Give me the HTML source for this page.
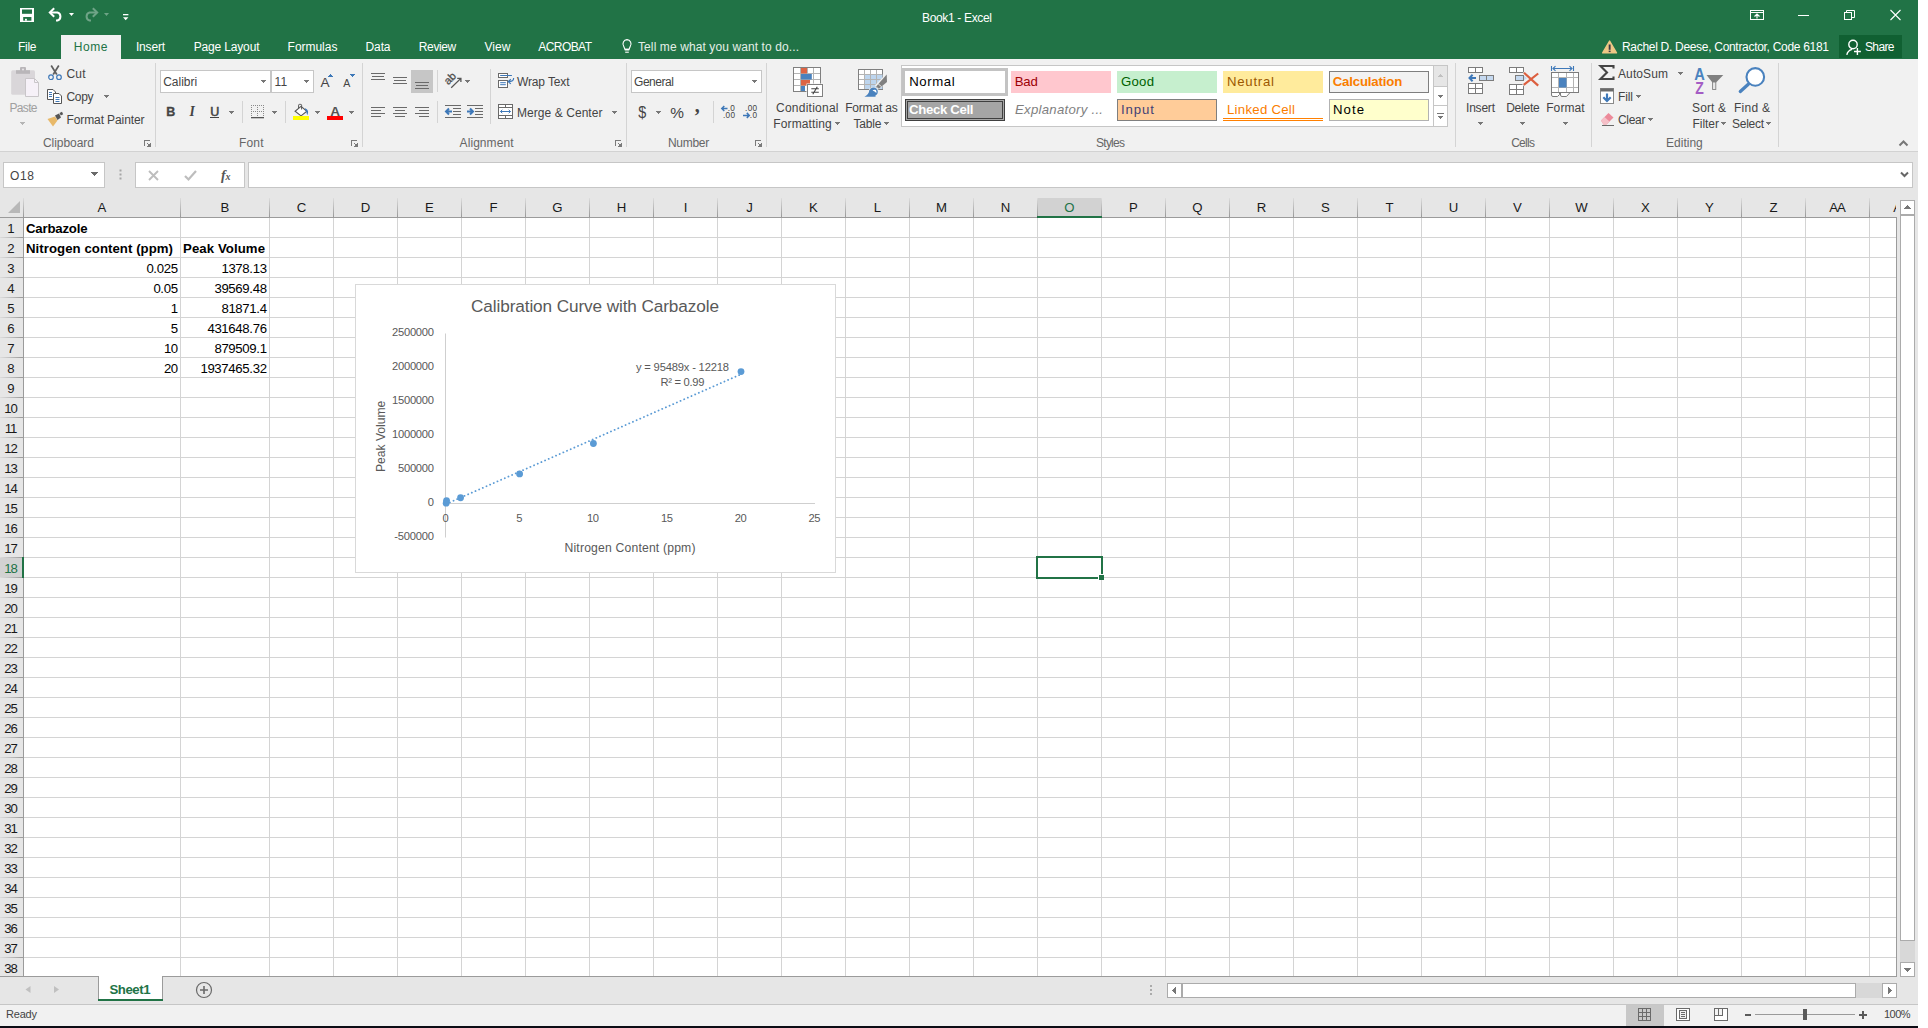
<!DOCTYPE html>
<html lang="en"><head><meta charset="utf-8"><title>Book1 - Excel</title>
<style>
html,body{margin:0;padding:0}
body{width:1928px;height:1028px;background:#fff;position:relative;overflow:hidden;font-family:"Liberation Sans", sans-serif;}
div,svg,span.t{position:absolute;box-sizing:border-box}
span.t{white-space:pre;line-height:1;}
svg{overflow:visible}
svg text{font-family:"Liberation Sans", sans-serif}
</style></head><body>
<div style="left:0px;top:0px;width:1918px;height:1026px;background:#e6e6e6;"></div>
<div style="left:0px;top:0px;width:1918px;height:59px;background:#217346;"></div>
<div style="left:0px;top:59px;width:1918px;height:92px;background:#f1f1f1;"></div>
<div style="left:0px;top:151px;width:1918px;height:1px;background:#d2d2d2;"></div>
<div style="left:0px;top:1026px;width:1918px;height:2px;background:#0c0c14;"></div>
<div style="left:24px;top:218px;width:1872px;height:758px;background:#fff;"></div>
<svg style="left:0;top:0" width="1918" height="1026"><g fill="#d4d4d4"><rect x="24" y="237" width="1872" height="1"/><rect x="24" y="257" width="1872" height="1"/><rect x="24" y="277" width="1872" height="1"/><rect x="24" y="297" width="1872" height="1"/><rect x="24" y="317" width="1872" height="1"/><rect x="24" y="337" width="1872" height="1"/><rect x="24" y="357" width="1872" height="1"/><rect x="24" y="377" width="1872" height="1"/><rect x="24" y="397" width="1872" height="1"/><rect x="24" y="417" width="1872" height="1"/><rect x="24" y="437" width="1872" height="1"/><rect x="24" y="457" width="1872" height="1"/><rect x="24" y="477" width="1872" height="1"/><rect x="24" y="497" width="1872" height="1"/><rect x="24" y="517" width="1872" height="1"/><rect x="24" y="537" width="1872" height="1"/><rect x="24" y="557" width="1872" height="1"/><rect x="24" y="577" width="1872" height="1"/><rect x="24" y="597" width="1872" height="1"/><rect x="24" y="617" width="1872" height="1"/><rect x="24" y="637" width="1872" height="1"/><rect x="24" y="657" width="1872" height="1"/><rect x="24" y="677" width="1872" height="1"/><rect x="24" y="697" width="1872" height="1"/><rect x="24" y="717" width="1872" height="1"/><rect x="24" y="737" width="1872" height="1"/><rect x="24" y="757" width="1872" height="1"/><rect x="24" y="777" width="1872" height="1"/><rect x="24" y="797" width="1872" height="1"/><rect x="24" y="817" width="1872" height="1"/><rect x="24" y="837" width="1872" height="1"/><rect x="24" y="857" width="1872" height="1"/><rect x="24" y="877" width="1872" height="1"/><rect x="24" y="897" width="1872" height="1"/><rect x="24" y="917" width="1872" height="1"/><rect x="24" y="937" width="1872" height="1"/><rect x="24" y="957" width="1872" height="1"/><rect x="180" y="218" width="1" height="758"/><rect x="269" y="218" width="1" height="758"/><rect x="333" y="218" width="1" height="758"/><rect x="397" y="218" width="1" height="758"/><rect x="461" y="218" width="1" height="758"/><rect x="525" y="218" width="1" height="758"/><rect x="589" y="218" width="1" height="758"/><rect x="653" y="218" width="1" height="758"/><rect x="717" y="218" width="1" height="758"/><rect x="781" y="218" width="1" height="758"/><rect x="845" y="218" width="1" height="758"/><rect x="909" y="218" width="1" height="758"/><rect x="973" y="218" width="1" height="758"/><rect x="1037" y="218" width="1" height="758"/><rect x="1101" y="218" width="1" height="758"/><rect x="1165" y="218" width="1" height="758"/><rect x="1229" y="218" width="1" height="758"/><rect x="1293" y="218" width="1" height="758"/><rect x="1357" y="218" width="1" height="758"/><rect x="1421" y="218" width="1" height="758"/><rect x="1485" y="218" width="1" height="758"/><rect x="1549" y="218" width="1" height="758"/><rect x="1613" y="218" width="1" height="758"/><rect x="1677" y="218" width="1" height="758"/><rect x="1741" y="218" width="1" height="758"/><rect x="1805" y="218" width="1" height="758"/><rect x="1869" y="218" width="1" height="758"/></g></svg>
<div style="left:0px;top:198px;width:1896px;height:19px;background:#e6e6e6;"></div>
<div style="left:0px;top:217px;width:24px;height:759px;background:#e6e6e6;"></div>
<div style="left:1038px;top:198px;width:63px;height:19px;background:#d2d2d2;"></div>
<div style="left:0px;top:558px;width:23px;height:19px;background:#d2d2d2;"></div>
<svg style="left:0;top:0" width="1918" height="1026"><defs><linearGradient id="hgv" x1="0" y1="0" x2="0" y2="1"><stop offset="0" stop-color="#dcdcdc"/><stop offset="1" stop-color="#999999"/></linearGradient><linearGradient id="hgh" x1="0" y1="0" x2="1" y2="0"><stop offset="0" stop-color="#dcdcdc"/><stop offset="1" stop-color="#999999"/></linearGradient></defs><g><rect x="23" y="198" width="1" height="19" fill="url(#hgv)"/><rect x="180" y="198" width="1" height="19" fill="url(#hgv)"/><rect x="269" y="198" width="1" height="19" fill="url(#hgv)"/><rect x="333" y="198" width="1" height="19" fill="url(#hgv)"/><rect x="397" y="198" width="1" height="19" fill="url(#hgv)"/><rect x="461" y="198" width="1" height="19" fill="url(#hgv)"/><rect x="525" y="198" width="1" height="19" fill="url(#hgv)"/><rect x="589" y="198" width="1" height="19" fill="url(#hgv)"/><rect x="653" y="198" width="1" height="19" fill="url(#hgv)"/><rect x="717" y="198" width="1" height="19" fill="url(#hgv)"/><rect x="781" y="198" width="1" height="19" fill="url(#hgv)"/><rect x="845" y="198" width="1" height="19" fill="url(#hgv)"/><rect x="909" y="198" width="1" height="19" fill="url(#hgv)"/><rect x="973" y="198" width="1" height="19" fill="url(#hgv)"/><rect x="1037" y="198" width="1" height="19" fill="url(#hgv)"/><rect x="1101" y="198" width="1" height="19" fill="url(#hgv)"/><rect x="1165" y="198" width="1" height="19" fill="url(#hgv)"/><rect x="1229" y="198" width="1" height="19" fill="url(#hgv)"/><rect x="1293" y="198" width="1" height="19" fill="url(#hgv)"/><rect x="1357" y="198" width="1" height="19" fill="url(#hgv)"/><rect x="1421" y="198" width="1" height="19" fill="url(#hgv)"/><rect x="1485" y="198" width="1" height="19" fill="url(#hgv)"/><rect x="1549" y="198" width="1" height="19" fill="url(#hgv)"/><rect x="1613" y="198" width="1" height="19" fill="url(#hgv)"/><rect x="1677" y="198" width="1" height="19" fill="url(#hgv)"/><rect x="1741" y="198" width="1" height="19" fill="url(#hgv)"/><rect x="1805" y="198" width="1" height="19" fill="url(#hgv)"/><rect x="1869" y="198" width="1" height="19" fill="url(#hgv)"/><rect x="0" y="237" width="23" height="1" fill="url(#hgh)"/><rect x="0" y="257" width="23" height="1" fill="url(#hgh)"/><rect x="0" y="277" width="23" height="1" fill="url(#hgh)"/><rect x="0" y="297" width="23" height="1" fill="url(#hgh)"/><rect x="0" y="317" width="23" height="1" fill="url(#hgh)"/><rect x="0" y="337" width="23" height="1" fill="url(#hgh)"/><rect x="0" y="357" width="23" height="1" fill="url(#hgh)"/><rect x="0" y="377" width="23" height="1" fill="url(#hgh)"/><rect x="0" y="397" width="23" height="1" fill="url(#hgh)"/><rect x="0" y="417" width="23" height="1" fill="url(#hgh)"/><rect x="0" y="437" width="23" height="1" fill="url(#hgh)"/><rect x="0" y="457" width="23" height="1" fill="url(#hgh)"/><rect x="0" y="477" width="23" height="1" fill="url(#hgh)"/><rect x="0" y="497" width="23" height="1" fill="url(#hgh)"/><rect x="0" y="517" width="23" height="1" fill="url(#hgh)"/><rect x="0" y="537" width="23" height="1" fill="url(#hgh)"/><rect x="0" y="557" width="23" height="1" fill="url(#hgh)"/><rect x="0" y="577" width="23" height="1" fill="url(#hgh)"/><rect x="0" y="597" width="23" height="1" fill="url(#hgh)"/><rect x="0" y="617" width="23" height="1" fill="url(#hgh)"/><rect x="0" y="637" width="23" height="1" fill="url(#hgh)"/><rect x="0" y="657" width="23" height="1" fill="url(#hgh)"/><rect x="0" y="677" width="23" height="1" fill="url(#hgh)"/><rect x="0" y="697" width="23" height="1" fill="url(#hgh)"/><rect x="0" y="717" width="23" height="1" fill="url(#hgh)"/><rect x="0" y="737" width="23" height="1" fill="url(#hgh)"/><rect x="0" y="757" width="23" height="1" fill="url(#hgh)"/><rect x="0" y="777" width="23" height="1" fill="url(#hgh)"/><rect x="0" y="797" width="23" height="1" fill="url(#hgh)"/><rect x="0" y="817" width="23" height="1" fill="url(#hgh)"/><rect x="0" y="837" width="23" height="1" fill="url(#hgh)"/><rect x="0" y="857" width="23" height="1" fill="url(#hgh)"/><rect x="0" y="877" width="23" height="1" fill="url(#hgh)"/><rect x="0" y="897" width="23" height="1" fill="url(#hgh)"/><rect x="0" y="917" width="23" height="1" fill="url(#hgh)"/><rect x="0" y="937" width="23" height="1" fill="url(#hgh)"/><rect x="0" y="957" width="23" height="1" fill="url(#hgh)"/><rect x="0" y="217" width="1896" height="1" fill="#9b9b9b"/><rect x="23" y="217" width="1" height="759" fill="#9b9b9b"/><rect x="0" y="976" width="1897" height="1" fill="#9b9b9b"/><rect x="1896" y="217" width="1" height="759" fill="#9b9b9b"/><path d="M20 201 L20 213 L8 213 Z" fill="#b8b8b8"/></g></svg>
<div style="left:1037px;top:216px;width:65px;height:2px;background:#217346;"></div>
<div style="left:22px;top:557px;width:2px;height:21px;background:#217346;"></div>
<span class="t" style="left:97.60px;top:201.15px;font-size:13.2px;color:#1a1a1a;">A</span>
<span class="t" style="left:220.60px;top:201.15px;font-size:13.2px;color:#1a1a1a;">B</span>
<span class="t" style="left:296.73px;top:201.15px;font-size:13.2px;color:#1a1a1a;">C</span>
<span class="t" style="left:360.73px;top:201.15px;font-size:13.2px;color:#1a1a1a;">D</span>
<span class="t" style="left:425.10px;top:201.15px;font-size:13.2px;color:#1a1a1a;">E</span>
<span class="t" style="left:489.47px;top:201.15px;font-size:13.2px;color:#1a1a1a;">F</span>
<span class="t" style="left:552.37px;top:201.15px;font-size:13.2px;color:#1a1a1a;">G</span>
<span class="t" style="left:616.73px;top:201.15px;font-size:13.2px;color:#1a1a1a;">H</span>
<span class="t" style="left:683.66px;top:201.15px;font-size:13.2px;color:#1a1a1a;">I</span>
<span class="t" style="left:746.20px;top:201.15px;font-size:13.2px;color:#1a1a1a;">J</span>
<span class="t" style="left:809.10px;top:201.15px;font-size:13.2px;color:#1a1a1a;">K</span>
<span class="t" style="left:873.83px;top:201.15px;font-size:13.2px;color:#1a1a1a;">L</span>
<span class="t" style="left:936.00px;top:201.15px;font-size:13.2px;color:#1a1a1a;">M</span>
<span class="t" style="left:1000.73px;top:201.15px;font-size:13.2px;color:#1a1a1a;">N</span>
<span class="t" style="left:1064.37px;top:201.15px;font-size:13.2px;color:#217346;">O</span>
<span class="t" style="left:1129.10px;top:201.15px;font-size:13.2px;color:#1a1a1a;">P</span>
<span class="t" style="left:1192.37px;top:201.15px;font-size:13.2px;color:#1a1a1a;">Q</span>
<span class="t" style="left:1256.73px;top:201.15px;font-size:13.2px;color:#1a1a1a;">R</span>
<span class="t" style="left:1321.10px;top:201.15px;font-size:13.2px;color:#1a1a1a;">S</span>
<span class="t" style="left:1385.47px;top:201.15px;font-size:13.2px;color:#1a1a1a;">T</span>
<span class="t" style="left:1448.73px;top:201.15px;font-size:13.2px;color:#1a1a1a;">U</span>
<span class="t" style="left:1513.10px;top:201.15px;font-size:13.2px;color:#1a1a1a;">V</span>
<span class="t" style="left:1575.27px;top:201.15px;font-size:13.2px;color:#1a1a1a;">W</span>
<span class="t" style="left:1641.10px;top:201.15px;font-size:13.2px;color:#1a1a1a;">X</span>
<span class="t" style="left:1705.10px;top:201.15px;font-size:13.2px;color:#1a1a1a;">Y</span>
<span class="t" style="left:1769.47px;top:201.15px;font-size:13.2px;color:#1a1a1a;">Z</span>
<span class="t" style="left:1829.32px;top:201.15px;font-size:13.2px;color:#1a1a1a;letter-spacing:-1.232px;">AA</span>
<div style="left:1870px;top:198px;width:26px;height:19px;overflow:hidden">
<span class="t" style="left:23.32px;top:3.15px;font-size:13.2px;color:#1a1a1a;letter-spacing:-1.232px;">AB</span>
</div>
<span class="t" style="left:7.33px;top:222.15px;font-size:13.2px;color:#1a1a1a;">1</span>
<span class="t" style="left:7.33px;top:242.15px;font-size:13.2px;color:#1a1a1a;">2</span>
<span class="t" style="left:7.33px;top:262.15px;font-size:13.2px;color:#1a1a1a;">3</span>
<span class="t" style="left:7.33px;top:282.15px;font-size:13.2px;color:#1a1a1a;">4</span>
<span class="t" style="left:7.33px;top:302.15px;font-size:13.2px;color:#1a1a1a;">5</span>
<span class="t" style="left:7.33px;top:322.15px;font-size:13.2px;color:#1a1a1a;">6</span>
<span class="t" style="left:7.33px;top:342.15px;font-size:13.2px;color:#1a1a1a;">7</span>
<span class="t" style="left:7.33px;top:362.15px;font-size:13.2px;color:#1a1a1a;">8</span>
<span class="t" style="left:7.33px;top:382.15px;font-size:13.2px;color:#1a1a1a;">9</span>
<span class="t" style="left:4.18px;top:402.15px;font-size:13.2px;color:#1a1a1a;letter-spacing:-1.027px;">10</span>
<span class="t" style="left:4.63px;top:422.15px;font-size:13.2px;color:#1a1a1a;letter-spacing:-0.959px;">11</span>
<span class="t" style="left:4.18px;top:442.15px;font-size:13.2px;color:#1a1a1a;letter-spacing:-1.027px;">12</span>
<span class="t" style="left:4.18px;top:462.15px;font-size:13.2px;color:#1a1a1a;letter-spacing:-1.027px;">13</span>
<span class="t" style="left:4.18px;top:482.15px;font-size:13.2px;color:#1a1a1a;letter-spacing:-1.027px;">14</span>
<span class="t" style="left:4.18px;top:502.15px;font-size:13.2px;color:#1a1a1a;letter-spacing:-1.027px;">15</span>
<span class="t" style="left:4.18px;top:522.15px;font-size:13.2px;color:#1a1a1a;letter-spacing:-1.027px;">16</span>
<span class="t" style="left:4.18px;top:542.15px;font-size:13.2px;color:#1a1a1a;letter-spacing:-1.027px;">17</span>
<span class="t" style="left:4.18px;top:562.15px;font-size:13.2px;color:#217346;letter-spacing:-1.027px;">18</span>
<span class="t" style="left:4.18px;top:582.15px;font-size:13.2px;color:#1a1a1a;letter-spacing:-1.027px;">19</span>
<span class="t" style="left:4.18px;top:602.15px;font-size:13.2px;color:#1a1a1a;letter-spacing:-1.027px;">20</span>
<span class="t" style="left:4.18px;top:622.15px;font-size:13.2px;color:#1a1a1a;letter-spacing:-1.027px;">21</span>
<span class="t" style="left:4.18px;top:642.15px;font-size:13.2px;color:#1a1a1a;letter-spacing:-1.027px;">22</span>
<span class="t" style="left:4.18px;top:662.15px;font-size:13.2px;color:#1a1a1a;letter-spacing:-1.027px;">23</span>
<span class="t" style="left:4.18px;top:682.15px;font-size:13.2px;color:#1a1a1a;letter-spacing:-1.027px;">24</span>
<span class="t" style="left:4.18px;top:702.15px;font-size:13.2px;color:#1a1a1a;letter-spacing:-1.027px;">25</span>
<span class="t" style="left:4.18px;top:722.15px;font-size:13.2px;color:#1a1a1a;letter-spacing:-1.027px;">26</span>
<span class="t" style="left:4.18px;top:742.15px;font-size:13.2px;color:#1a1a1a;letter-spacing:-1.027px;">27</span>
<span class="t" style="left:4.18px;top:762.15px;font-size:13.2px;color:#1a1a1a;letter-spacing:-1.027px;">28</span>
<span class="t" style="left:4.18px;top:782.15px;font-size:13.2px;color:#1a1a1a;letter-spacing:-1.027px;">29</span>
<span class="t" style="left:4.18px;top:802.15px;font-size:13.2px;color:#1a1a1a;letter-spacing:-1.027px;">30</span>
<span class="t" style="left:4.18px;top:822.15px;font-size:13.2px;color:#1a1a1a;letter-spacing:-1.027px;">31</span>
<span class="t" style="left:4.18px;top:842.15px;font-size:13.2px;color:#1a1a1a;letter-spacing:-1.027px;">32</span>
<span class="t" style="left:4.18px;top:862.15px;font-size:13.2px;color:#1a1a1a;letter-spacing:-1.027px;">33</span>
<span class="t" style="left:4.18px;top:882.15px;font-size:13.2px;color:#1a1a1a;letter-spacing:-1.027px;">34</span>
<span class="t" style="left:4.18px;top:902.15px;font-size:13.2px;color:#1a1a1a;letter-spacing:-1.027px;">35</span>
<span class="t" style="left:4.18px;top:922.15px;font-size:13.2px;color:#1a1a1a;letter-spacing:-1.027px;">36</span>
<span class="t" style="left:4.18px;top:942.15px;font-size:13.2px;color:#1a1a1a;letter-spacing:-1.027px;">37</span>
<span class="t" style="left:4.18px;top:962.15px;font-size:13.2px;color:#1a1a1a;letter-spacing:-1.027px;">38</span>
<span class="t" style="left:26.00px;top:222.15px;font-size:13.2px;color:#000;letter-spacing:-0.191px;font-weight:bold;">Carbazole</span>
<span class="t" style="left:26.00px;top:242.15px;font-size:13.2px;color:#000;letter-spacing:0.058px;font-weight:bold;">Nitrogen content (ppm)</span>
<span class="t" style="left:183.00px;top:242.15px;font-size:13.2px;color:#000;letter-spacing:0.087px;font-weight:bold;">Peak Volume</span>
<span class="t" style="left:146.40px;top:262.15px;font-size:13.2px;color:#000;letter-spacing:-0.354px;">0.025</span>
<span class="t" style="left:221.40px;top:262.15px;font-size:13.2px;color:#000;letter-spacing:-0.345px;">1378.13</span>
<span class="t" style="left:153.40px;top:282.15px;font-size:13.2px;color:#000;letter-spacing:-0.357px;">0.05</span>
<span class="t" style="left:214.40px;top:282.15px;font-size:13.2px;color:#000;letter-spacing:-0.345px;">39569.48</span>
<span class="t" style="left:170.66px;top:302.15px;font-size:13.2px;color:#000;">1</span>
<span class="t" style="left:221.40px;top:302.15px;font-size:13.2px;color:#000;letter-spacing:-0.345px;">81871.4</span>
<span class="t" style="left:170.66px;top:322.15px;font-size:13.2px;color:#000;">5</span>
<span class="t" style="left:207.40px;top:322.15px;font-size:13.2px;color:#000;letter-spacing:-0.343px;">431648.76</span>
<span class="t" style="left:164.00px;top:342.15px;font-size:13.2px;color:#000;letter-spacing:-0.672px;">10</span>
<span class="t" style="left:214.40px;top:342.15px;font-size:13.2px;color:#000;letter-spacing:-0.345px;">879509.1</span>
<span class="t" style="left:164.00px;top:362.15px;font-size:13.2px;color:#000;letter-spacing:-0.672px;">20</span>
<span class="t" style="left:200.40px;top:362.15px;font-size:13.2px;color:#000;letter-spacing:-0.343px;">1937465.32</span>
<div style="left:1036px;top:556px;width:67px;height:23px;border:2px solid #217346;"></div>
<div style="left:1098px;top:574px;width:6px;height:6px;background:#fff;"></div>
<div style="left:1099px;top:575px;width:5px;height:5px;background:#217346;"></div>
<div style="left:355px;top:284px;width:481px;height:289px;background:#fff;border:1px solid #d9d9d9;"></div>
<svg style="left:0;top:0" width="1918" height="1026"><rect x="445" y="333.5" width="1" height="204" fill="#cfcfcf"/><rect x="445" y="503" width="370" height="1" fill="#cfcfcf"/><line x1="446.17" y1="503.97" x2="741.00" y2="374.27" stroke="#5b9bd5" stroke-width="1.800" stroke-linecap="round" stroke-dasharray="0.100 3.900"/><circle cx="446.17" cy="503.21" r="3.4" fill="#5b9bd5"/><circle cx="446.54" cy="500.61" r="3.4" fill="#5b9bd5"/><circle cx="460.56" cy="497.73" r="3.4" fill="#5b9bd5"/><circle cx="519.60" cy="473.95" r="3.4" fill="#5b9bd5"/><circle cx="593.40" cy="443.49" r="3.4" fill="#5b9bd5"/><circle cx="741.00" cy="371.55" r="3.4" fill="#5b9bd5"/></svg>
<span class="t" style="left:471.00px;top:297.65px;font-size:17.2px;color:#595959;letter-spacing:-0.105px;">Calibration Curve with Carbazole</span>
<span class="t" style="left:392.00px;top:326.65px;font-size:11.2px;color:#595959;letter-spacing:-0.260px;">2500000</span>
<span class="t" style="left:392.00px;top:360.65px;font-size:11.2px;color:#595959;letter-spacing:-0.260px;">2000000</span>
<span class="t" style="left:392.00px;top:394.65px;font-size:11.2px;color:#595959;letter-spacing:-0.260px;">1500000</span>
<span class="t" style="left:392.00px;top:428.65px;font-size:11.2px;color:#595959;letter-spacing:-0.260px;">1000000</span>
<span class="t" style="left:398.00px;top:462.65px;font-size:11.2px;color:#595959;letter-spacing:-0.269px;">500000</span>
<span class="t" style="left:427.77px;top:496.65px;font-size:11.2px;color:#595959;">0</span>
<span class="t" style="left:394.30px;top:530.65px;font-size:11.2px;color:#595959;letter-spacing:-0.227px;">-500000</span>
<span class="t" style="left:442.38px;top:512.65px;font-size:11.2px;color:#595959;">0</span>
<span class="t" style="left:516.18px;top:512.65px;font-size:11.2px;color:#595959;">5</span>
<span class="t" style="left:587.10px;top:512.65px;font-size:11.2px;color:#595959;letter-spacing:-0.453px;">10</span>
<span class="t" style="left:660.90px;top:512.65px;font-size:11.2px;color:#595959;letter-spacing:-0.453px;">15</span>
<span class="t" style="left:734.70px;top:512.65px;font-size:11.2px;color:#595959;letter-spacing:-0.453px;">20</span>
<span class="t" style="left:808.50px;top:512.65px;font-size:11.2px;color:#595959;letter-spacing:-0.453px;">25</span>
<span class="t" style="left:564.50px;top:542.15px;font-size:12.2px;color:#595959;letter-spacing:0.173px;">Nitrogen Content (ppm)</span>
<span class="t" style="left:636.00px;top:362.15px;font-size:11.2px;color:#595959;letter-spacing:-0.183px;">y = 95489x - 12218</span>
<span class="t" style="left:660.50px;top:376.65px;font-size:11.2px;color:#595959;letter-spacing:-0.293px;">R² = 0.99</span>
<div style="left:383px;top:436px;width:0;height:0;transform:rotate(-90deg);"><span class="t" style="left:-36px;top:-7.6px;font-size:12.2px;color:#595959;letter-spacing:-0.05px">Peak Volume</span></div>
<div style="left:1900px;top:200px;width:15px;height:777px;background:#d8d8d8;"></div>
<div style="left:1900px;top:200px;width:15px;height:15px;background:#fff;border:1px solid #ababab;"></div>
<div style="left:1900px;top:962px;width:15px;height:15px;background:#fff;border:1px solid #ababab;"></div>
<div style="left:1900px;top:215px;width:15px;height:726px;background:#fff;border:1px solid #ababab;"></div>
<svg style="left:1904px;top:205px;" width="7" height="4" viewBox="0 0 7 4"><g fill="#777" shape-rendering="crispEdges"><rect x="3" y="0" width="1" height="1"/><rect x="2" y="1" width="3" height="1"/><rect x="1" y="2" width="5" height="1"/><rect x="0" y="3" width="7" height="1"/></g></svg>
<svg style="left:1904px;top:968px;" width="7" height="4" viewBox="0 0 7 4"><g fill="#777" shape-rendering="crispEdges"><rect x="0" y="0" width="7" height="1"/><rect x="1" y="1" width="5" height="1"/><rect x="2" y="2" width="3" height="1"/><rect x="3" y="3" width="1" height="1"/></g></svg>
<div style="left:0px;top:977px;width:1918px;height:27px;background:#e6e6e6;"></div>
<div style="left:0px;top:1004px;width:1918px;height:1px;background:#c6c6c6;"></div>
<div style="left:0px;top:1005px;width:1918px;height:21px;background:#f1f1f1;"></div>
<div style="left:98px;top:976px;width:65px;height:25px;background:#fff;border:1px solid #9b9b9b;border-top:none;border-bottom:none;"></div>
<div style="left:98px;top:999px;width:65px;height:2px;background:#217346;"></div>
<span class="t" style="left:109.50px;top:983.15px;font-size:13.2px;color:#217346;letter-spacing:-0.450px;font-weight:bold;">Sheet1</span>
<svg style="left:20px;top:982px;" width="50" height="16" viewBox="0 0 50 16"><path d="M10 7.5 L5 4 L5 11 Z" transform="scale(-1,1) translate(-15.5,0)" fill="#c0c0c0"/><path d="M39 7.5 L34 4 L34 11 Z" fill="#c0c0c0"/></svg>
<svg style="left:195px;top:981px;" width="18" height="18" viewBox="0 0 18 18"><circle cx="9" cy="9" r="7.5" fill="none" stroke="#6a6a6a" stroke-width="1.2"/><path d="M5 9 H13 M9 5 V13" stroke="#6a6a6a" stroke-width="1.6" fill="none"/></svg>
<svg style="left:1148px;top:984px;" width="6" height="12" viewBox="0 0 6 12"><rect x="2" y="1" width="2" height="2" fill="#ababab"/><rect x="2" y="5" width="2" height="2" fill="#ababab"/><rect x="2" y="9" width="2" height="2" fill="#ababab"/></svg>
<div style="left:1167px;top:983px;width:730px;height:15px;background:#d8d8d8;"></div>
<div style="left:1167px;top:983px;width:15px;height:15px;background:#fff;border:1px solid #ababab;"></div>
<div style="left:1182px;top:983px;width:674px;height:15px;background:#fff;border:1px solid #ababab;"></div>
<div style="left:1882px;top:983px;width:15px;height:15px;background:#fff;border:1px solid #ababab;"></div>
<svg style="left:1172px;top:987px;" width="4" height="7" viewBox="0 0 4 7"><g fill="#777" shape-rendering="crispEdges"><rect x="0" y="3" width="1" height="1"/><rect x="1" y="2" width="1" height="3"/><rect x="2" y="1" width="1" height="5"/><rect x="3" y="0" width="1" height="7"/></g></svg>
<svg style="left:1888px;top:987px;" width="4" height="7" viewBox="0 0 4 7"><g fill="#777" shape-rendering="crispEdges"><rect x="0" y="0" width="1" height="7"/><rect x="1" y="1" width="1" height="5"/><rect x="2" y="2" width="1" height="3"/><rect x="3" y="3" width="1" height="1"/></g></svg>
<span class="t" style="left:6.00px;top:1008.75px;font-size:11px;color:#444;letter-spacing:-0.199px;">Ready</span>
<div style="left:1626px;top:1005px;width:38px;height:21px;background:#c8c8c8;"></div>
<svg style="left:1638px;top:1008px;" width="13" height="13" viewBox="0 0 13 13"><g shape-rendering="crispEdges"><rect x="0" y="0" width="13" height="13" fill="#6a6a6a"/><rect x="1" y="1" width="3" height="3" fill="#c8c8c8"/><rect x="1" y="5" width="3" height="3" fill="#c8c8c8"/><rect x="1" y="9" width="3" height="3" fill="#c8c8c8"/><rect x="5" y="1" width="3" height="3" fill="#c8c8c8"/><rect x="5" y="5" width="3" height="3" fill="#c8c8c8"/><rect x="5" y="9" width="3" height="3" fill="#c8c8c8"/><rect x="9" y="1" width="3" height="3" fill="#c8c8c8"/><rect x="9" y="5" width="3" height="3" fill="#c8c8c8"/><rect x="9" y="9" width="3" height="3" fill="#c8c8c8"/></g></svg>
<svg style="left:1676px;top:1008px;" width="14" height="13" viewBox="0 0 14 13"><g shape-rendering="crispEdges"><rect x="0" y="0" width="14" height="13" fill="#6a6a6a"/><rect x="1" y="1" width="12" height="11" fill="#fff"/><rect x="3" y="2" width="8" height="9" fill="#6a6a6a"/><rect x="4" y="3" width="6" height="7" fill="#f1f1f1"/><rect x="5" y="4" width="4" height="1" fill="#6a6a6a"/><rect x="5" y="6" width="4" height="1" fill="#6a6a6a"/><rect x="5" y="8" width="4" height="1" fill="#6a6a6a"/></g></svg>
<svg style="left:1714px;top:1008px;" width="14" height="13" viewBox="0 0 14 13"><g shape-rendering="crispEdges"><rect x="0" y="0" width="14" height="13" fill="#6a6a6a"/><rect x="1" y="1" width="12" height="11" fill="#fff"/><rect x="1" y="1" width="8" height="7" fill="#6a6a6a"/><rect x="1" y="1" width="3" height="6" fill="#f4f4f4"/><rect x="5" y="1" width="3" height="6" fill="#f4f4f4"/></g></svg>
<div style="left:1745px;top:1014px;width:6px;height:2px;background:#5a5a5a;"></div>
<div style="left:1755px;top:1014px;width:100px;height:1px;background:#9a9a9a;"></div>
<div style="left:1803px;top:1009px;width:4px;height:11px;background:#5a5a5a;"></div>
<div style="left:1859px;top:1014px;width:8px;height:2px;background:#5a5a5a;"></div>
<div style="left:1862px;top:1011px;width:2px;height:8px;background:#5a5a5a;"></div>
<span class="t" style="left:1884.00px;top:1008.75px;font-size:11px;color:#444;letter-spacing:-0.547px;">100%</span>
<span class="t" style="left:922.00px;top:12.25px;font-size:12px;color:#fff;letter-spacing:-0.337px;">Book1 - Excel</span>
<svg style="left:19px;top:7px;" width="16" height="16" viewBox="0 0 16 16"><rect x="1" y="1" width="14" height="14" fill="#fff"/><rect x="3" y="2.500" width="10" height="4.300" fill="#217346"/><rect x="4.200" y="10" width="8.200" height="3.700" fill="#217346"/><rect x="6" y="11.800" width="1.900" height="1.900" fill="#fff"/></svg>
<svg style="left:48px;top:7px;" width="16" height="16" viewBox="0 0 16 16"><path d="M2 5.500 H9.500 A4.200 4.200 0 0 1 9.500 13.500 H8" fill="none" stroke="#fff" stroke-width="2"/><path d="M6.200 1.200 L1.800 5.500 L6.200 9.800" fill="none" stroke="#fff" stroke-width="2"/></svg>
<svg style="left:69px;top:13px;" width="6" height="4" viewBox="0 0 6 4"><path d="M0 0 H5 L2.5 3 Z" fill="#fff"/></svg>
<svg style="left:83px;top:7px;" width="16" height="16" viewBox="0 0 16 16"><g opacity="0.35"><path d="M14 5.500 H6.500 A4.200 4.200 0 0 0 6.500 13.500 H8" fill="none" stroke="#fff" stroke-width="2"/><path d="M9.800 1.200 L14.200 5.500 L9.800 9.800" fill="none" stroke="#fff" stroke-width="2"/></g></svg>
<svg style="left:104px;top:13px;" width="6" height="4" viewBox="0 0 6 4"><path d="M0 0 H5 L2.5 3 Z" fill="#fff" opacity="0.35"/></svg>
<svg style="left:123px;top:13px;" width="6" height="8" viewBox="0 0 6 8"><rect x="0" y="1" width="5.400" height="1.300" fill="#fff"/><path d="M0 4.200 H5.400 L2.700 7.200 Z" fill="#fff"/></svg>
<svg style="left:1750px;top:10px;" width="14" height="10" viewBox="0 0 14 10"><rect x="0.5" y="0.5" width="13" height="9" fill="none" stroke="#fff"/><path d="M0.5 2.5 H13.5" stroke="#fff"/><path d="M7 8.500 V4.500 M4.500 6.500 L7 4 L9.500 6.500" fill="none" stroke="#fff" stroke-width="1.200"/></svg>
<div style="left:1798px;top:15px;width:11px;height:1px;background:#fff;"></div>
<svg style="left:1844px;top:10px;" width="11" height="10" viewBox="0 0 11 10"><rect x="0.5" y="2.5" width="7" height="7" fill="none" stroke="#fff"/><path d="M2.5 2.5 V0.5 H10.5 V7.5 H8" fill="none" stroke="#fff"/></svg>
<svg style="left:1890px;top:10px;" width="11" height="10" viewBox="0 0 11 10"><path d="M0.5 0 L10.5 10 M10.5 0 L0.5 10" stroke="#fff" stroke-width="1.1" fill="none"/></svg>
<div style="left:61px;top:35px;width:60px;height:25px;background:#f1f1f1;"></div>
<span class="t" style="left:18.10px;top:41.25px;font-size:12px;color:#fff;letter-spacing:-0.315px;">File</span>
<span class="t" style="left:73.70px;top:41.25px;font-size:12px;color:#217346;letter-spacing:0.595px;">Home</span>
<span class="t" style="left:135.90px;top:41.25px;font-size:12px;color:#fff;letter-spacing:-0.163px;">Insert</span>
<span class="t" style="left:193.70px;top:41.25px;font-size:12px;color:#fff;letter-spacing:-0.159px;">Page Layout</span>
<span class="t" style="left:287.60px;top:41.25px;font-size:12px;color:#fff;letter-spacing:-0.031px;">Formulas</span>
<span class="t" style="left:365.60px;top:41.25px;font-size:12px;color:#fff;letter-spacing:-0.153px;">Data</span>
<span class="t" style="left:418.80px;top:41.25px;font-size:12px;color:#fff;letter-spacing:-0.372px;">Review</span>
<span class="t" style="left:484.50px;top:41.25px;font-size:12px;color:#fff;letter-spacing:0.034px;">View</span>
<span class="t" style="left:538.30px;top:41.25px;font-size:12px;color:#fff;letter-spacing:-0.571px;">ACROBAT</span>
<svg style="left:620.5px;top:38px;" width="12" height="16" viewBox="0 0 12 16"><path d="M6 1.600 A4.300 4.300 0 0 1 9.300 8.300 L8.100 11.200 H3.900 L2.700 8.300 A4.300 4.300 0 0 1 6 1.600 Z" fill="none" stroke="#fff" stroke-width="1.100"/><rect x="3.700" y="10.800" width="4.600" height="1.700" fill="#fff"/><path d="M4.200 14.200 H7.800" stroke="#fff" stroke-width="1.100"/></svg>
<span class="t" style="left:638.00px;top:41.25px;font-size:12px;color:#e4efe8;letter-spacing:0.100px;">Tell me what you want to do...</span>
<svg style="left:1601.8px;top:40px;" width="16" height="14" viewBox="0 0 16 14"><path d="M7.600 1 L14.500 12.900 H0.700 Z" fill="#efc886" stroke="#efc886" stroke-width="1.400" stroke-linejoin="round"/><rect x="6.700" y="4.500" width="1.900" height="5.300" fill="#3a3a44"/><rect x="6.700" y="10.600" width="1.900" height="1.500" fill="#3a3a44"/></svg>
<span class="t" style="left:1622.00px;top:41.25px;font-size:12px;color:#fff;letter-spacing:-0.301px;">Rachel D. Deese, Contractor, Code 6181</span>
<div style="left:1839px;top:35px;width:63px;height:23px;background:#106032;"></div>
<svg style="left:1846px;top:40px;" width="16" height="16" viewBox="0 0 16 16"><circle cx="7" cy="4.500" r="4.200" fill="none" stroke="#fff" stroke-width="1.400"/><path d="M0.800 14.900 A7.200 7.200 0 0 1 6 9.400" fill="none" stroke="#fff" stroke-width="1.400"/><path d="M11.400 8.100 V14.900 M8 11.500 H14.900" stroke="#fff" stroke-width="1.400"/></svg>
<span class="t" style="left:1865.00px;top:41.25px;font-size:12px;color:#fff;letter-spacing:-0.633px;">Share</span>
<div style="left:3px;top:162px;width:102px;height:26px;background:#fff;border:1px solid #c6c6c6;"></div>
<span class="t" style="left:10.00px;top:170.25px;font-size:12px;color:#444;letter-spacing:0.656px;">O18</span>
<svg style="left:91px;top:172px;" width="7" height="4" viewBox="0 0 7 4"><g fill="#6a6a6a" shape-rendering="crispEdges"><rect x="0" y="0" width="7" height="1"/><rect x="1" y="1" width="5" height="1"/><rect x="2" y="2" width="3" height="1"/><rect x="3" y="3" width="1" height="1"/></g></svg>
<svg style="left:119px;top:169px;" width="3" height="12" viewBox="0 0 3 12"><rect x="0.500" y="0.500" width="2" height="2" fill="#a6a6a6"/><rect x="0.500" y="4.500" width="2" height="2" fill="#a6a6a6"/><rect x="0.500" y="8.500" width="2" height="2" fill="#a6a6a6"/></svg>
<div style="left:135px;top:162px;width:110px;height:26px;background:#fff;border:1px solid #c6c6c6;"></div>
<svg style="left:148px;top:170px;" width="11" height="11" viewBox="0 0 11 11"><path d="M1 1 L10 10 M10 1 L1 10" stroke="#bdbdbd" stroke-width="1.900" fill="none"/></svg>
<svg style="left:184px;top:170px;" width="13" height="11" viewBox="0 0 13 11"><path d="M1 6 L4.5 9.5 L12 1" stroke="#bdbdbd" stroke-width="2.200" fill="none"/></svg>
<span class="t" style="left:221.00px;top:168.75px;font-size:14px;color:#555;font-weight:bold;font-style:italic;font-family:'Liberation Serif',serif;">f</span>
<span class="t" style="left:225.50px;top:172.25px;font-size:10px;color:#555;font-weight:bold;font-style:italic;font-family:'Liberation Serif',serif;">x</span>
<div style="left:248px;top:162px;width:1665px;height:26px;background:#fff;border:1px solid #c6c6c6;"></div>
<svg style="left:1900px;top:171px;" width="9" height="7" viewBox="0 0 9 7"><path d="M1 1.500 L4.500 5 L8 1.500" stroke="#666" stroke-width="2" fill="none"/></svg>
<div style="left:155px;top:63px;width:1px;height:84px;background:#d4d4d4;"></div>
<div style="left:362px;top:63px;width:1px;height:84px;background:#d4d4d4;"></div>
<div style="left:626px;top:63px;width:1px;height:84px;background:#d4d4d4;"></div>
<div style="left:766px;top:63px;width:1px;height:84px;background:#d4d4d4;"></div>
<div style="left:1455px;top:63px;width:1px;height:84px;background:#d4d4d4;"></div>
<div style="left:1591px;top:63px;width:1px;height:84px;background:#d4d4d4;"></div>
<div style="left:1778px;top:63px;width:1px;height:84px;background:#d4d4d4;"></div>
<svg style="left:10px;top:66px;" width="30" height="32" viewBox="0 0 30 32"><rect x="1.2" y="4.2" width="23.8" height="24.5" rx="1.5" fill="#d9d6d9"/><rect x="6" y="4.2" width="14" height="3.6" fill="#b9b6b9"/><rect x="10" y="1" width="6" height="4" rx="1" fill="#b9b6b9"/><circle cx="13" cy="3.6" r="1" fill="#e9e6e9"/><path d="M15.500 12.500 H24.5 L28.5 16.500 V30.500 H15.500 Z" fill="#f6f1f8" stroke="#c9c6c9"/><path d="M24.5 12.500 V16.500 H28.5" fill="none" stroke="#c9c6c9"/></svg>
<span class="t" style="left:9.50px;top:102.25px;font-size:12px;color:#a0a0a0;letter-spacing:-0.672px;">Paste</span>
<svg style="left:20px;top:122px;" width="5" height="3" viewBox="0 0 5 3"><g fill="#b5b5b5" shape-rendering="crispEdges"><rect x="0" y="0" width="5" height="1"/><rect x="1" y="1" width="3" height="1"/><rect x="2" y="2" width="1" height="1"/></g></svg>
<svg style="left:47px;top:65px;" width="16" height="16" viewBox="0 0 16 16"><path d="M4.200 0.500 L9.8 9.500 M11.800 0.500 L6.200 9.500" stroke="#5e5e5e" stroke-width="1.700" fill="none"/><circle cx="4" cy="12.200" r="2.300" fill="none" stroke="#3e78b8" stroke-width="1.200"/><circle cx="12" cy="12.200" r="2.300" fill="none" stroke="#3e78b8" stroke-width="1.200"/></svg>
<span class="t" style="left:66.50px;top:68.25px;font-size:12px;color:#444;letter-spacing:0.156px;">Cut</span>
<svg style="left:46px;top:88px;" width="18" height="16" viewBox="0 0 18 16"><path d="M1.5 1.5 H7 L9.5 4 V11.5 H1.5 Z" fill="#fff" stroke="#555"/><path d="M3 4.5 H6 M3 6.5 H6 M3 8.5 H6" stroke="#3e78b8"/><path d="M7.5 5.5 H13 L15.5 8 V15.5 H7.5 Z" fill="#fff" stroke="#555"/><path d="M9.5 9.5 H13.5 M9.5 11.5 H13.5 M9.5 13.5 H13.5" stroke="#3e78b8"/></svg>
<span class="t" style="left:66.50px;top:91.25px;font-size:12px;color:#444;letter-spacing:-0.339px;">Copy</span>
<svg style="left:104px;top:95px;" width="5" height="3" viewBox="0 0 5 3"><g fill="#777" shape-rendering="crispEdges"><rect x="0" y="0" width="5" height="1"/><rect x="1" y="1" width="3" height="1"/><rect x="2" y="2" width="1" height="1"/></g></svg>
<svg style="left:47px;top:111px;" width="17" height="16" viewBox="0 0 17 16"><path d="M0.5 8 L8 5.5 L10.5 9.5 L6 15.5 Z" fill="#e8b96a"/><path d="M8 4.5 L12 2.5 L14 6.5 L10.5 9 Z" fill="#555"/><path d="M12.5 2 L15 0.8 L16.2 3.2 L13.8 4.5 Z" fill="#555"/></svg>
<span class="t" style="left:66.50px;top:114.25px;font-size:12px;color:#444;letter-spacing:-0.105px;">Format Painter</span>
<span class="t" style="left:43.00px;top:137.25px;font-size:12px;color:#666;letter-spacing:-0.047px;">Clipboard</span>
<svg style="left:144px;top:140px;" width="7" height="7" viewBox="0 0 7 7"><g fill="#7a7a7a" shape-rendering="crispEdges"><rect x="0" y="0" width="1" height="1"/><rect x="1" y="0" width="1" height="1"/><rect x="2" y="0" width="1" height="1"/><rect x="3" y="0" width="1" height="1"/><rect x="4" y="0" width="1" height="1"/><rect x="5" y="0" width="1" height="1"/><rect x="0" y="1" width="1" height="1"/><rect x="0" y="2" width="1" height="1"/><rect x="0" y="3" width="1" height="1"/><rect x="0" y="4" width="1" height="1"/><rect x="0" y="5" width="1" height="1"/><rect x="3" y="3" width="1" height="1"/><rect x="6" y="3" width="1" height="1"/><rect x="4" y="4" width="1" height="1"/><rect x="5" y="4" width="1" height="1"/><rect x="6" y="4" width="1" height="1"/><rect x="4" y="5" width="1" height="1"/><rect x="5" y="5" width="1" height="1"/><rect x="6" y="5" width="1" height="1"/><rect x="3" y="6" width="1" height="1"/><rect x="4" y="6" width="1" height="1"/><rect x="5" y="6" width="1" height="1"/><rect x="6" y="6" width="1" height="1"/></g></svg>
<div style="left:160px;top:70px;width:111px;height:23px;background:#fff;border:1px solid #c6c6c6;"></div>
<div style="left:271px;top:70px;width:43px;height:23px;background:#fff;border:1px solid #c6c6c6;"></div>
<span class="t" style="left:163.20px;top:76.25px;font-size:12px;color:#444;">Calibri</span>
<svg style="left:261px;top:80px;" width="5" height="3" viewBox="0 0 5 3"><g fill="#777" shape-rendering="crispEdges"><rect x="0" y="0" width="5" height="1"/><rect x="1" y="1" width="3" height="1"/><rect x="2" y="2" width="1" height="1"/></g></svg>
<span class="t" style="left:274.50px;top:76.25px;font-size:12px;color:#444;letter-spacing:0.131px;">11</span>
<svg style="left:304px;top:80px;" width="5" height="3" viewBox="0 0 5 3"><g fill="#777" shape-rendering="crispEdges"><rect x="0" y="0" width="5" height="1"/><rect x="1" y="1" width="3" height="1"/><rect x="2" y="2" width="1" height="1"/></g></svg>
<span class="t" style="left:320.40px;top:75.95px;font-size:13.6px;color:#444;">A</span>
<svg style="left:328px;top:74px;" width="5" height="3" viewBox="0 0 5 3"><g fill="#3e78b8" shape-rendering="crispEdges"><rect x="2" y="0" width="1" height="1"/><rect x="1" y="1" width="3" height="1"/><rect x="0" y="2" width="5" height="1"/></g></svg>
<span class="t" style="left:343.30px;top:77.95px;font-size:10.6px;color:#444;">A</span>
<svg style="left:350px;top:74px;" width="5" height="3" viewBox="0 0 5 3"><g fill="#3e78b8" shape-rendering="crispEdges"><rect x="0" y="0" width="5" height="1"/><rect x="1" y="1" width="3" height="1"/><rect x="2" y="2" width="1" height="1"/></g></svg>
<span class="t" style="left:166.30px;top:106.00px;font-size:12.5px;color:#444;font-weight:bold;-webkit-text-stroke:0.3px #444;">B</span>
<span class="t" style="left:189.50px;top:104.95px;font-size:13.6px;color:#444;font-style:italic;font-family:'Liberation Serif',serif;font-weight:bold;">I</span>
<span class="t" style="left:210.20px;top:106.00px;font-size:12.5px;color:#444;-webkit-text-stroke:0.55px #444;">U</span>
<div style="left:210px;top:117px;width:9px;height:1px;background:#444;"></div>
<svg style="left:229px;top:111px;" width="5" height="3" viewBox="0 0 5 3"><g fill="#777" shape-rendering="crispEdges"><rect x="0" y="0" width="5" height="1"/><rect x="1" y="1" width="3" height="1"/><rect x="2" y="2" width="1" height="1"/></g></svg>
<div style="left:242px;top:101px;width:1px;height:22px;background:#d4d4d4;"></div>
<svg style="left:251px;top:105px;" width="14" height="14" viewBox="0 0 14 14"><g fill="#8a8a8a"><rect x="0" y="0" width="1" height="1"/><rect x="0" y="6" width="1" height="1"/><rect x="2" y="0" width="1" height="1"/><rect x="2" y="6" width="1" height="1"/><rect x="4" y="0" width="1" height="1"/><rect x="4" y="6" width="1" height="1"/><rect x="6" y="0" width="1" height="1"/><rect x="6" y="6" width="1" height="1"/><rect x="8" y="0" width="1" height="1"/><rect x="8" y="6" width="1" height="1"/><rect x="10" y="0" width="1" height="1"/><rect x="10" y="6" width="1" height="1"/><rect x="12" y="0" width="1" height="1"/><rect x="12" y="6" width="1" height="1"/><rect x="0" y="0" width="1" height="1"/><rect x="6" y="0" width="1" height="1"/><rect x="12" y="0" width="1" height="1"/><rect x="0" y="2" width="1" height="1"/><rect x="6" y="2" width="1" height="1"/><rect x="12" y="2" width="1" height="1"/><rect x="0" y="4" width="1" height="1"/><rect x="6" y="4" width="1" height="1"/><rect x="12" y="4" width="1" height="1"/><rect x="0" y="6" width="1" height="1"/><rect x="6" y="6" width="1" height="1"/><rect x="12" y="6" width="1" height="1"/><rect x="0" y="8" width="1" height="1"/><rect x="6" y="8" width="1" height="1"/><rect x="12" y="8" width="1" height="1"/><rect x="0" y="10" width="1" height="1"/><rect x="6" y="10" width="1" height="1"/><rect x="12" y="10" width="1" height="1"/></g><rect x="0" y="12" width="13" height="1.3" fill="#555"/></svg>
<svg style="left:272px;top:111px;" width="5" height="3" viewBox="0 0 5 3"><g fill="#777" shape-rendering="crispEdges"><rect x="0" y="0" width="5" height="1"/><rect x="1" y="1" width="3" height="1"/><rect x="2" y="2" width="1" height="1"/></g></svg>
<div style="left:285px;top:101px;width:1px;height:22px;background:#d4d4d4;"></div>
<svg style="left:293px;top:103px;" width="18" height="18" viewBox="0 0 18 18"><path d="M8 3.400 L13.900 8.200 L8 12.900 L2.100 8.200 Z" fill="#fff" stroke="#555" stroke-width="1.100"/><path d="M5.600 5.500 V2.200 A0.800 0.800 0 0 1 6.400 1.400 H7.800 A0.800 0.800 0 0 1 8.600 2.200 V6.500" fill="none" stroke="#555" stroke-width="1"/><path d="M12.300 5.200 Q16.800 7.500 14.200 12.300 Q13.800 9 11.800 6 Z" fill="#3e78b8"/><rect x="0" y="13" width="16" height="4" fill="#ffff00"/></svg>
<svg style="left:315px;top:111px;" width="5" height="3" viewBox="0 0 5 3"><g fill="#777" shape-rendering="crispEdges"><rect x="0" y="0" width="5" height="1"/><rect x="1" y="1" width="3" height="1"/><rect x="2" y="2" width="1" height="1"/></g></svg>
<span class="t" style="left:330.30px;top:104.95px;font-size:13.6px;color:#555;font-weight:bold;">A</span>
<div style="left:327px;top:116px;width:16px;height:4px;background:#ff0000;"></div>
<svg style="left:349px;top:111px;" width="5" height="3" viewBox="0 0 5 3"><g fill="#777" shape-rendering="crispEdges"><rect x="0" y="0" width="5" height="1"/><rect x="1" y="1" width="3" height="1"/><rect x="2" y="2" width="1" height="1"/></g></svg>
<span class="t" style="left:239.10px;top:137.25px;font-size:12px;color:#666;letter-spacing:0.128px;">Font</span>
<svg style="left:351px;top:140px;" width="7" height="7" viewBox="0 0 7 7"><g fill="#7a7a7a" shape-rendering="crispEdges"><rect x="0" y="0" width="1" height="1"/><rect x="1" y="0" width="1" height="1"/><rect x="2" y="0" width="1" height="1"/><rect x="3" y="0" width="1" height="1"/><rect x="4" y="0" width="1" height="1"/><rect x="5" y="0" width="1" height="1"/><rect x="0" y="1" width="1" height="1"/><rect x="0" y="2" width="1" height="1"/><rect x="0" y="3" width="1" height="1"/><rect x="0" y="4" width="1" height="1"/><rect x="0" y="5" width="1" height="1"/><rect x="3" y="3" width="1" height="1"/><rect x="6" y="3" width="1" height="1"/><rect x="4" y="4" width="1" height="1"/><rect x="5" y="4" width="1" height="1"/><rect x="6" y="4" width="1" height="1"/><rect x="4" y="5" width="1" height="1"/><rect x="5" y="5" width="1" height="1"/><rect x="6" y="5" width="1" height="1"/><rect x="3" y="6" width="1" height="1"/><rect x="4" y="6" width="1" height="1"/><rect x="5" y="6" width="1" height="1"/><rect x="6" y="6" width="1" height="1"/></g></svg>
<div style="left:371.0px;top:73px;width:14px;height:1px;background:#6a6a6a;"></div>
<div style="left:372.0px;top:76px;width:12px;height:1px;background:#6a6a6a;"></div>
<div style="left:371.0px;top:79px;width:14px;height:1px;background:#6a6a6a;"></div>
<div style="left:393.0px;top:77px;width:14px;height:1px;background:#6a6a6a;"></div>
<div style="left:394.0px;top:80px;width:12px;height:1px;background:#6a6a6a;"></div>
<div style="left:393.0px;top:83px;width:14px;height:1px;background:#6a6a6a;"></div>
<div style="left:411px;top:70px;width:22px;height:23px;background:#c6c6c6;"></div>
<div style="left:415.0px;top:82px;width:14px;height:1px;background:#6a6a6a;"></div>
<div style="left:416.0px;top:85px;width:12px;height:1px;background:#6a6a6a;"></div>
<div style="left:415.0px;top:88px;width:14px;height:1px;background:#6a6a6a;"></div>
<div style="left:437px;top:70px;width:1px;height:22px;background:#d4d4d4;"></div>
<svg style="left:444px;top:72px;" width="18" height="17" viewBox="0 0 18 17"><text x="0" y="0" font-size="10.800" fill="#505050" stroke="#505050" stroke-width="0.300" transform="translate(4.300,13.300) rotate(-45)">ab</text><path d="M7.200 15.700 L16.600 6.600 M13.200 6.300 H16.900 V10" fill="none" stroke="#555" stroke-width="1.300"/></svg>
<svg style="left:465px;top:80px;" width="5" height="3" viewBox="0 0 5 3"><g fill="#777" shape-rendering="crispEdges"><rect x="0" y="0" width="5" height="1"/><rect x="1" y="1" width="3" height="1"/><rect x="2" y="2" width="1" height="1"/></g></svg>
<div style="left:490px;top:69px;width:1px;height:55px;background:#d4d4d4;"></div>
<svg style="left:498px;top:73px;" width="17" height="15" viewBox="0 0 17 15"><rect x="0.500" y="0.500" width="9" height="4" fill="#fff" stroke="#6a6a6a"/><rect x="0.500" y="7.500" width="9" height="7" fill="#fff" stroke="#6a6a6a"/><path d="M2.200 2.500 H13.900 M2.200 9.700 H7.800 M2.200 11.700 H7.800" stroke="#3e78b8" stroke-width="1"/><path d="M15.600 5 Q15.800 8.600 10.500 8.600 M12.800 6.300 L10.200 8.600 L12.800 10.900" fill="none" stroke="#3e78b8" stroke-width="1.200"/></svg>
<span class="t" style="left:517.00px;top:76.25px;font-size:12px;color:#444;letter-spacing:-0.135px;">Wrap Text</span>
<div style="left:371px;top:107px;width:14px;height:1px;background:#6a6a6a;"></div>
<div style="left:371px;top:110px;width:10px;height:1px;background:#6a6a6a;"></div>
<div style="left:371px;top:113px;width:14px;height:1px;background:#6a6a6a;"></div>
<div style="left:371px;top:116px;width:10px;height:1px;background:#6a6a6a;"></div>
<div style="left:393.0px;top:107px;width:14px;height:1px;background:#6a6a6a;"></div>
<div style="left:395.0px;top:110px;width:10px;height:1px;background:#6a6a6a;"></div>
<div style="left:393.0px;top:113px;width:14px;height:1px;background:#6a6a6a;"></div>
<div style="left:395.0px;top:116px;width:10px;height:1px;background:#6a6a6a;"></div>
<div style="left:415px;top:107px;width:14px;height:1px;background:#6a6a6a;"></div>
<div style="left:419px;top:110px;width:10px;height:1px;background:#6a6a6a;"></div>
<div style="left:415px;top:113px;width:14px;height:1px;background:#6a6a6a;"></div>
<div style="left:419px;top:116px;width:10px;height:1px;background:#6a6a6a;"></div>
<div style="left:437px;top:101px;width:1px;height:22px;background:#d4d4d4;"></div>
<svg style="left:445px;top:105px;" width="17" height="13" viewBox="0 0 17 13"><path d="M0 0.5 H16 M8 3.5 H16 M8 6.5 H16 M8 9.5 H16 M0 12.5 H16" stroke="#6a6a6a"/><path d="M7 6.500 H1.200 M4 3.500 L1 6.500 L4 9.500" fill="none" stroke="#3e78b8" stroke-width="2"/></svg>
<svg style="left:467px;top:105px;" width="17" height="13" viewBox="0 0 17 13"><path d="M0 0.5 H16 M8 3.5 H16 M8 6.5 H16 M8 9.5 H16 M0 12.5 H16" stroke="#6a6a6a"/><path d="M0 6.500 H5.800 M3 3.500 L6 6.500 L3 9.500" fill="none" stroke="#3e78b8" stroke-width="2"/></svg>
<svg style="left:498px;top:104px;" width="16" height="15" viewBox="0 0 16 15"><rect x="0.5" y="0.5" width="14" height="14" fill="#fff" stroke="#6a6a6a"/><path d="M0.5 3.5 H14.5 M0.5 11.5 H14.5 M7.5 0.5 V3.5 M7.5 11.5 V14.5" stroke="#6a6a6a"/><path d="M2.5 7.5 H12.5 M4.3 5.8 L2.5 7.5 L4.3 9.2 M10.7 5.8 L12.5 7.5 L10.7 9.2" fill="none" stroke="#3e78b8"/></svg>
<span class="t" style="left:517.00px;top:107.25px;font-size:12px;color:#444;letter-spacing:0.061px;">Merge &amp; Center</span>
<svg style="left:612px;top:111px;" width="5" height="3" viewBox="0 0 5 3"><g fill="#777" shape-rendering="crispEdges"><rect x="0" y="0" width="5" height="1"/><rect x="1" y="1" width="3" height="1"/><rect x="2" y="2" width="1" height="1"/></g></svg>
<span class="t" style="left:459.60px;top:137.25px;font-size:12px;color:#666;letter-spacing:0.066px;">Alignment</span>
<svg style="left:615px;top:140px;" width="7" height="7" viewBox="0 0 7 7"><g fill="#7a7a7a" shape-rendering="crispEdges"><rect x="0" y="0" width="1" height="1"/><rect x="1" y="0" width="1" height="1"/><rect x="2" y="0" width="1" height="1"/><rect x="3" y="0" width="1" height="1"/><rect x="4" y="0" width="1" height="1"/><rect x="5" y="0" width="1" height="1"/><rect x="0" y="1" width="1" height="1"/><rect x="0" y="2" width="1" height="1"/><rect x="0" y="3" width="1" height="1"/><rect x="0" y="4" width="1" height="1"/><rect x="0" y="5" width="1" height="1"/><rect x="3" y="3" width="1" height="1"/><rect x="6" y="3" width="1" height="1"/><rect x="4" y="4" width="1" height="1"/><rect x="5" y="4" width="1" height="1"/><rect x="6" y="4" width="1" height="1"/><rect x="4" y="5" width="1" height="1"/><rect x="5" y="5" width="1" height="1"/><rect x="6" y="5" width="1" height="1"/><rect x="3" y="6" width="1" height="1"/><rect x="4" y="6" width="1" height="1"/><rect x="5" y="6" width="1" height="1"/><rect x="6" y="6" width="1" height="1"/></g></svg>
<div style="left:631px;top:70px;width:131px;height:23px;background:#fff;border:1px solid #c6c6c6;"></div>
<span class="t" style="left:634.00px;top:76.25px;font-size:12px;color:#444;letter-spacing:-0.451px;">General</span>
<svg style="left:752px;top:80px;" width="5" height="3" viewBox="0 0 5 3"><g fill="#777" shape-rendering="crispEdges"><rect x="0" y="0" width="5" height="1"/><rect x="1" y="1" width="3" height="1"/><rect x="2" y="2" width="1" height="1"/></g></svg>
<span class="t" style="left:638.30px;top:105.05px;font-size:14.4px;color:#444;transform:scaleY(1.2);transform-origin:50% 62%;">$</span>
<svg style="left:656px;top:111px;" width="5" height="3" viewBox="0 0 5 3"><g fill="#777" shape-rendering="crispEdges"><rect x="0" y="0" width="5" height="1"/><rect x="1" y="1" width="3" height="1"/><rect x="2" y="2" width="1" height="1"/></g></svg>
<span class="t" style="left:670.20px;top:105.05px;font-size:15.4px;color:#444;">%</span>
<span class="t" style="left:694.80px;top:95.25px;font-size:20px;color:#444;font-weight:bold;font-family:'Liberation Serif',serif;">,</span>
<div style="left:713px;top:101px;width:1px;height:22px;background:#d4d4d4;"></div>
<svg style="left:721px;top:105px;" width="15" height="14" viewBox="0 0 15 14"><path d="M6.500 3.500 H0.800 M3.300 1 L0.800 3.500 L3.300 6" fill="none" stroke="#3e78b8" stroke-width="1.500"/><text x="6.700" y="6" font-size="8.200" fill="#444" letter-spacing="0.35">.0</text><text x="2" y="13.400" font-size="8.200" fill="#444" letter-spacing="0.35">.00</text></svg>
<svg style="left:743px;top:105px;" width="15" height="14" viewBox="0 0 15 14"><text x="2.100" y="6" font-size="8.200" fill="#444" letter-spacing="0.35">.00</text><path d="M0 10.400 H6.300 M3.800 7.900 L6.300 10.400 L3.800 12.900" fill="none" stroke="#3e78b8" stroke-width="1.500"/><text x="6.800" y="13.400" font-size="8.200" fill="#444" letter-spacing="0.35">.0</text></svg>
<span class="t" style="left:667.90px;top:137.25px;font-size:12px;color:#666;letter-spacing:-0.277px;">Number</span>
<svg style="left:755px;top:140px;" width="7" height="7" viewBox="0 0 7 7"><g fill="#7a7a7a" shape-rendering="crispEdges"><rect x="0" y="0" width="1" height="1"/><rect x="1" y="0" width="1" height="1"/><rect x="2" y="0" width="1" height="1"/><rect x="3" y="0" width="1" height="1"/><rect x="4" y="0" width="1" height="1"/><rect x="5" y="0" width="1" height="1"/><rect x="0" y="1" width="1" height="1"/><rect x="0" y="2" width="1" height="1"/><rect x="0" y="3" width="1" height="1"/><rect x="0" y="4" width="1" height="1"/><rect x="0" y="5" width="1" height="1"/><rect x="3" y="3" width="1" height="1"/><rect x="6" y="3" width="1" height="1"/><rect x="4" y="4" width="1" height="1"/><rect x="5" y="4" width="1" height="1"/><rect x="6" y="4" width="1" height="1"/><rect x="4" y="5" width="1" height="1"/><rect x="5" y="5" width="1" height="1"/><rect x="6" y="5" width="1" height="1"/><rect x="3" y="6" width="1" height="1"/><rect x="4" y="6" width="1" height="1"/><rect x="5" y="6" width="1" height="1"/><rect x="6" y="6" width="1" height="1"/></g></svg>
<svg style="left:793px;top:67px;" width="31" height="31" viewBox="0 0 31 31"><rect x="0.500" y="0.500" width="27" height="24" fill="#fff" stroke="#808080"/><path d="M7.500 1 V24 M14.500 1 V24 M20.500 1 V24 M1 6.500 H27 M1 12.500 H27 M1 18.500 H27" stroke="#b4b4b4"/><rect x="8" y="1" width="6" height="5.500" fill="#dd6444"/><rect x="8" y="7" width="10.800" height="5.500" fill="#4a82be"/><rect x="8" y="13" width="9" height="5.500" fill="#dd6444"/><rect x="8" y="19" width="4" height="5" fill="#4a82be"/><rect x="13.500" y="16.500" width="17" height="14" fill="#f6f6f6"/><rect x="14.500" y="17.500" width="15" height="12" fill="#fff" stroke="#808080"/><path d="M18.300 21.800 H25.800 M18.300 25.200 H25.800 M24.300 19.800 L19.800 27.300" stroke="#444" stroke-width="1.100"/></svg>
<span class="t" style="left:776.00px;top:102.25px;font-size:12px;color:#444;letter-spacing:0.245px;">Conditional</span>
<span class="t" style="left:773.30px;top:118.25px;font-size:12px;color:#444;letter-spacing:0.127px;">Formatting</span>
<svg style="left:835px;top:122px;" width="5" height="3" viewBox="0 0 5 3"><g fill="#777" shape-rendering="crispEdges"><rect x="0" y="0" width="5" height="1"/><rect x="1" y="1" width="3" height="1"/><rect x="2" y="2" width="1" height="1"/></g></svg>
<svg style="left:858px;top:69px;" width="30" height="29" viewBox="0 0 30 29"><rect x="0.500" y="0.500" width="24" height="20" fill="#fff" stroke="#808080"/><rect x="6.500" y="5.500" width="18" height="14.500" fill="#bdd5ee"/><path d="M6.500 1 V20 M12.500 1 V20 M18.500 1 V20 M1 5.500 H24 M1 10.500 H24 M1 15.500 H24" stroke="#b4b4b4"/><path d="M16.800 16.500 L28.700 4.200 L29.400 12.800 L20.600 20.600 Z" fill="#f1f1f1"/><path d="M18.100 17.500 L28.700 5.400 L29 12.900 L20.900 19.800 Z" fill="#808080"/><path d="M20.300 15 L23.600 17.700" stroke="#f1f1f1" stroke-width="0.900"/><circle cx="15.500" cy="22.800" r="4.900" fill="#f1f1f1"/><path d="M6.400 27.800 Q10.800 25.600 11.700 20.800 L18 27.300 Q16.500 27.900 15 27.800 Z" fill="#4a82be"/><circle cx="15.500" cy="22.800" r="4.300" fill="#4a82be"/><path d="M14.500 21.600 Q16 20.200 17.800 20.900 Q18.900 22.300 18.300 24 Q16.800 22.200 14.500 21.600 Z" fill="#fff"/></svg>
<span class="t" style="left:845.20px;top:102.25px;font-size:12px;color:#444;letter-spacing:-0.189px;">Format as</span>
<span class="t" style="left:853.40px;top:118.25px;font-size:12px;color:#444;letter-spacing:-0.172px;">Table</span>
<svg style="left:884px;top:122px;" width="5" height="3" viewBox="0 0 5 3"><g fill="#777" shape-rendering="crispEdges"><rect x="0" y="0" width="5" height="1"/><rect x="1" y="1" width="3" height="1"/><rect x="2" y="2" width="1" height="1"/></g></svg>
<div style="left:901px;top:65px;width:547px;height:62px;background:#fff;border:1px solid #c6c6c6;"></div>
<div style="left:902px;top:68px;width:106px;height:28px;background:#c3c3c3;"></div>
<div style="left:905px;top:71px;width:100px;height:22px;background:#fff;"></div>
<span class="t" style="left:909.20px;top:75.15px;font-size:13.2px;color:#000;letter-spacing:0.600px;">Normal</span>
<div style="left:1011px;top:71px;width:100px;height:22px;background:#ffc7ce;"></div>
<span class="t" style="left:1014.80px;top:75.15px;font-size:13.2px;color:#9c0006;letter-spacing:-0.234px;">Bad</span>
<div style="left:1117px;top:71px;width:100px;height:22px;background:#c6efce;"></div>
<span class="t" style="left:1121.00px;top:75.15px;font-size:13.2px;color:#006100;letter-spacing:0.245px;">Good</span>
<div style="left:1223px;top:71px;width:100px;height:22px;background:#ffeb9c;"></div>
<span class="t" style="left:1227.00px;top:75.15px;font-size:13.2px;color:#9c5700;letter-spacing:0.747px;">Neutral</span>
<div style="left:1329px;top:71px;width:100px;height:22px;background:#f2f2f2;border:1px solid #7f7f7f;"></div>
<span class="t" style="left:1332.70px;top:75.15px;font-size:13.2px;color:#fa7d00;letter-spacing:-0.158px;font-weight:bold;">Calculation</span>
<div style="left:905px;top:99px;width:100px;height:22px;background:#a5a5a5;border:1px solid #3f3f3f;"></div>
<div style="left:907px;top:101px;width:96px;height:18px;border:1px solid #3f3f3f;"></div>
<span class="t" style="left:909.00px;top:103.15px;font-size:13.2px;color:#fff;letter-spacing:-0.326px;font-weight:bold;">Check Cell</span>
<span class="t" style="left:1015.00px;top:103.15px;font-size:13.2px;color:#7f7f7f;letter-spacing:0.265px;font-style:italic;">Explanatory ...</span>
<div style="left:1117px;top:99px;width:100px;height:22px;background:#ffcc99;border:1px solid #7f7f7f;"></div>
<span class="t" style="left:1121.00px;top:103.15px;font-size:13.2px;color:#3f3f76;letter-spacing:0.914px;">Input</span>
<span class="t" style="left:1227.00px;top:103.15px;font-size:13.2px;color:#fa7d00;letter-spacing:0.275px;">Linked Cell</span>
<div style="left:1223px;top:118px;width:100px;height:1px;background:#ff8001;"></div>
<div style="left:1223px;top:120px;width:100px;height:1px;background:#ff8001;"></div>
<div style="left:1329px;top:99px;width:100px;height:22px;background:#ffffcc;border:1px solid #b2b2b2;"></div>
<span class="t" style="left:1333.00px;top:103.15px;font-size:13.2px;color:#000;letter-spacing:1.047px;">Note</span>
<div style="left:1433px;top:65px;width:15px;height:62px;background:#fff;border:1px solid #c6c6c6;"></div>
<div style="left:1434px;top:66px;width:13px;height:20px;background:#e6e6e6;"></div>
<div style="left:1433px;top:86px;width:15px;height:1px;background:#c6c6c6;"></div>
<div style="left:1433px;top:105px;width:15px;height:1px;background:#c6c6c6;"></div>
<svg style="left:1438px;top:74px;" width="5" height="3" viewBox="0 0 5 3"><g fill="#c0c0c0" shape-rendering="crispEdges"><rect x="2" y="0" width="1" height="1"/><rect x="1" y="1" width="3" height="1"/><rect x="0" y="2" width="5" height="1"/></g></svg>
<svg style="left:1438px;top:95px;" width="5" height="3" viewBox="0 0 5 3"><g fill="#777" shape-rendering="crispEdges"><rect x="0" y="0" width="5" height="1"/><rect x="1" y="1" width="3" height="1"/><rect x="2" y="2" width="1" height="1"/></g></svg>
<div style="left:1437px;top:113px;width:7px;height:1px;background:#777;"></div>
<svg style="left:1438px;top:116px;" width="5" height="3" viewBox="0 0 5 3"><g fill="#777" shape-rendering="crispEdges"><rect x="0" y="0" width="5" height="1"/><rect x="1" y="1" width="3" height="1"/><rect x="2" y="2" width="1" height="1"/></g></svg>
<span class="t" style="left:1096.10px;top:137.25px;font-size:12px;color:#666;letter-spacing:-0.777px;">Styles</span>
<svg style="left:1468px;top:67px;" width="27" height="28" viewBox="0 0 27 28"><g fill="#fff" stroke="#7c7c7c"><rect x="0.500" y="0.500" width="7" height="5"/><rect x="7.500" y="0.500" width="7" height="5"/><rect x="0.500" y="16.500" width="7" height="5"/><rect x="7.500" y="16.500" width="7" height="5"/><rect x="0.500" y="21.500" width="7" height="5"/><rect x="7.500" y="21.500" width="7" height="5"/></g><g fill="#c5d9f0" stroke="#7c7c7c"><rect x="11.500" y="8.500" width="7" height="5"/><rect x="18.500" y="8.500" width="7" height="5"/></g><path d="M8 11 H1.800 M4.600 7.800 L1.500 11 L4.600 14.200" fill="none" stroke="#3e78b8" stroke-width="2"/></svg>
<span class="t" style="left:1466.00px;top:102.25px;font-size:12px;color:#444;letter-spacing:-0.203px;">Insert</span>
<svg style="left:1478px;top:122px;" width="5" height="3" viewBox="0 0 5 3"><g fill="#777" shape-rendering="crispEdges"><rect x="0" y="0" width="5" height="1"/><rect x="1" y="1" width="3" height="1"/><rect x="2" y="2" width="1" height="1"/></g></svg>
<svg style="left:1509px;top:67px;" width="30" height="28" viewBox="0 0 30 28"><g fill="#fff" stroke="#7c7c7c"><rect x="0.500" y="0.500" width="7" height="5"/><rect x="7.500" y="0.500" width="7" height="5"/><rect x="0.500" y="17.500" width="7" height="5"/><rect x="7.500" y="17.500" width="7" height="5"/><rect x="0.500" y="22.500" width="7" height="5"/><rect x="7.500" y="22.500" width="7" height="5"/></g><path d="M14.500 8.500 L18.500 11 L14.500 13.500 Z" fill="#c5d9f0"/><g fill="#c5d9f0" stroke="#7c7c7c"><rect x="6.500" y="8.500" width="8" height="5"/></g><path d="M14.500 5.300 L29.700 19.100 M29.700 6 L14.200 18.400" stroke="#f1f1f1" stroke-width="3.600" fill="none"/><path d="M15 5.800 L29.200 18.600 M29.200 6.500 L14.700 17.900" stroke="#dc5f3f" stroke-width="2.200" fill="none"/></svg>
<span class="t" style="left:1506.20px;top:102.25px;font-size:12px;color:#444;letter-spacing:-0.237px;">Delete</span>
<svg style="left:1520px;top:122px;" width="5" height="3" viewBox="0 0 5 3"><g fill="#777" shape-rendering="crispEdges"><rect x="0" y="0" width="5" height="1"/><rect x="1" y="1" width="3" height="1"/><rect x="2" y="2" width="1" height="1"/></g></svg>
<svg style="left:1550px;top:65px;" width="30" height="33" viewBox="0 0 30 33"><path d="M1.500 1 V6 M23.500 1 V6 M3 3.500 H22 M5.500 1.200 L3 3.500 L5.500 5.800 M19.500 1.200 L22 3.500 L19.500 5.800" fill="none" stroke="#3e78b8" stroke-width="1.100"/><path d="M1.500 27.500 V30 Q1.500 31.500 3 31.500 H7.500 L9.500 29.500 V27.500 M10.500 27.500 V30 Q10.500 31.500 12 31.500 H16.500 L19.800 27.800" fill="#fff" stroke="#7c7c7c"/><rect x="1.500" y="7.500" width="27" height="20" fill="#fff" stroke="#7c7c7c"/><path d="M8.500 8 V27 M16.500 8 V27 M23.500 8 V27 M2 12.500 H28 M2 22.500 H28" stroke="#b4b4b4"/><rect x="9" y="13" width="7.500" height="9.500" fill="#4a82be"/></svg>
<span class="t" style="left:1546.20px;top:102.25px;font-size:12px;color:#444;letter-spacing:0.097px;">Format</span>
<svg style="left:1563px;top:122px;" width="5" height="3" viewBox="0 0 5 3"><g fill="#777" shape-rendering="crispEdges"><rect x="0" y="0" width="5" height="1"/><rect x="1" y="1" width="3" height="1"/><rect x="2" y="2" width="1" height="1"/></g></svg>
<span class="t" style="left:1511.20px;top:137.25px;font-size:12px;color:#666;letter-spacing:-0.743px;">Cells</span>
<svg style="left:1599px;top:65px;" width="16" height="15" viewBox="0 0 16 15"><path d="M14.5 3.5 V1 H1.5 L8 7.500 L1.5 14 H14.5 V11.5" fill="none" stroke="#444" stroke-width="2.100"/></svg>
<span class="t" style="left:1618.00px;top:68.25px;font-size:12px;color:#444;letter-spacing:0.107px;">AutoSum</span>
<svg style="left:1678px;top:72px;" width="5" height="3" viewBox="0 0 5 3"><g fill="#777" shape-rendering="crispEdges"><rect x="0" y="0" width="5" height="1"/><rect x="1" y="1" width="3" height="1"/><rect x="2" y="2" width="1" height="1"/></g></svg>
<svg style="left:1600px;top:88px;" width="15" height="16" viewBox="0 0 15 16"><rect x="0.500" y="0.5" width="13" height="15" fill="#fff" stroke="#8a8a8a"/><rect x="0.5" y="0.5" width="13" height="3" fill="#6a6a6a"/><path d="M7 5.500 V13 M3.300 9.300 L7 13 L10.700 9.300" fill="none" stroke="#3e78b8" stroke-width="2.200"/></svg>
<span class="t" style="left:1618.00px;top:91.25px;font-size:12px;color:#444;letter-spacing:-0.109px;">Fill</span>
<svg style="left:1636px;top:95px;" width="5" height="3" viewBox="0 0 5 3"><g fill="#777" shape-rendering="crispEdges"><rect x="0" y="0" width="5" height="1"/><rect x="1" y="1" width="3" height="1"/><rect x="2" y="2" width="1" height="1"/></g></svg>
<svg style="left:1600px;top:112px;" width="15" height="14" viewBox="0 0 15 14"><path d="M1 8.500 L8.500 1 L13.5 5.5 L6.500 12.5 H3.5 Z" fill="#ec8a9a"/><path d="M1 8.500 L4.5 5 L9.5 9.500 L6.500 12.5 H3.500 Z" fill="#f6c0c8"/><path d="M2 13.500 H14" stroke="#6a6a6a"/></svg>
<span class="t" style="left:1618.00px;top:114.25px;font-size:12px;color:#444;letter-spacing:-0.297px;">Clear</span>
<svg style="left:1648px;top:118px;" width="5" height="3" viewBox="0 0 5 3"><g fill="#777" shape-rendering="crispEdges"><rect x="0" y="0" width="5" height="1"/><rect x="1" y="1" width="3" height="1"/><rect x="2" y="2" width="1" height="1"/></g></svg>
<svg style="left:1694px;top:68px;" width="31" height="27" viewBox="0 0 31 27"><g transform="scale(0.9,1)"><text x="0.300" y="11.800" font-size="16.300" font-weight="bold" fill="#4a82be">A</text><text x="1.300" y="25.800" font-size="15.600" font-weight="bold" fill="#a45cc4">Z</text></g><path d="M12.500 7.100 H29.300 L21.800 14.800 H18.600 Z" fill="#808080"/><rect x="18.600" y="14" width="3.200" height="7.500" fill="#e8e8e8" stroke="#808080" stroke-width="0.900"/></svg>
<span class="t" style="left:1692.00px;top:102.25px;font-size:12px;color:#444;letter-spacing:0.128px;">Sort &amp;</span>
<span class="t" style="left:1692.50px;top:118.25px;font-size:12px;color:#444;letter-spacing:-0.034px;">Filter</span>
<svg style="left:1721px;top:122px;" width="5" height="3" viewBox="0 0 5 3"><g fill="#777" shape-rendering="crispEdges"><rect x="0" y="0" width="5" height="1"/><rect x="1" y="1" width="3" height="1"/><rect x="2" y="2" width="1" height="1"/></g></svg>
<svg style="left:1738px;top:66px;" width="28" height="29" viewBox="0 0 28 29"><circle cx="17.300" cy="10.900" r="8.800" fill="#fff" stroke="#4a82be" stroke-width="2.100"/><path d="M10.300 18.300 L2.300 25.500" stroke="#4a82be" stroke-width="3.300" stroke-linecap="round"/></svg>
<span class="t" style="left:1734.00px;top:102.25px;font-size:12px;color:#444;letter-spacing:0.263px;">Find &amp;</span>
<span class="t" style="left:1732.00px;top:118.25px;font-size:12px;color:#444;letter-spacing:-0.272px;">Select</span>
<svg style="left:1766px;top:122px;" width="5" height="3" viewBox="0 0 5 3"><g fill="#777" shape-rendering="crispEdges"><rect x="0" y="0" width="5" height="1"/><rect x="1" y="1" width="3" height="1"/><rect x="2" y="2" width="1" height="1"/></g></svg>
<span class="t" style="left:1666.10px;top:137.25px;font-size:12px;color:#666;">Editing</span>
<svg style="left:1898px;top:139px;" width="11" height="8" viewBox="0 0 11 8"><path d="M1.500 6.500 L5.500 2.500 L9.500 6.500" fill="none" stroke="#777" stroke-width="2"/></svg>
</body></html>
